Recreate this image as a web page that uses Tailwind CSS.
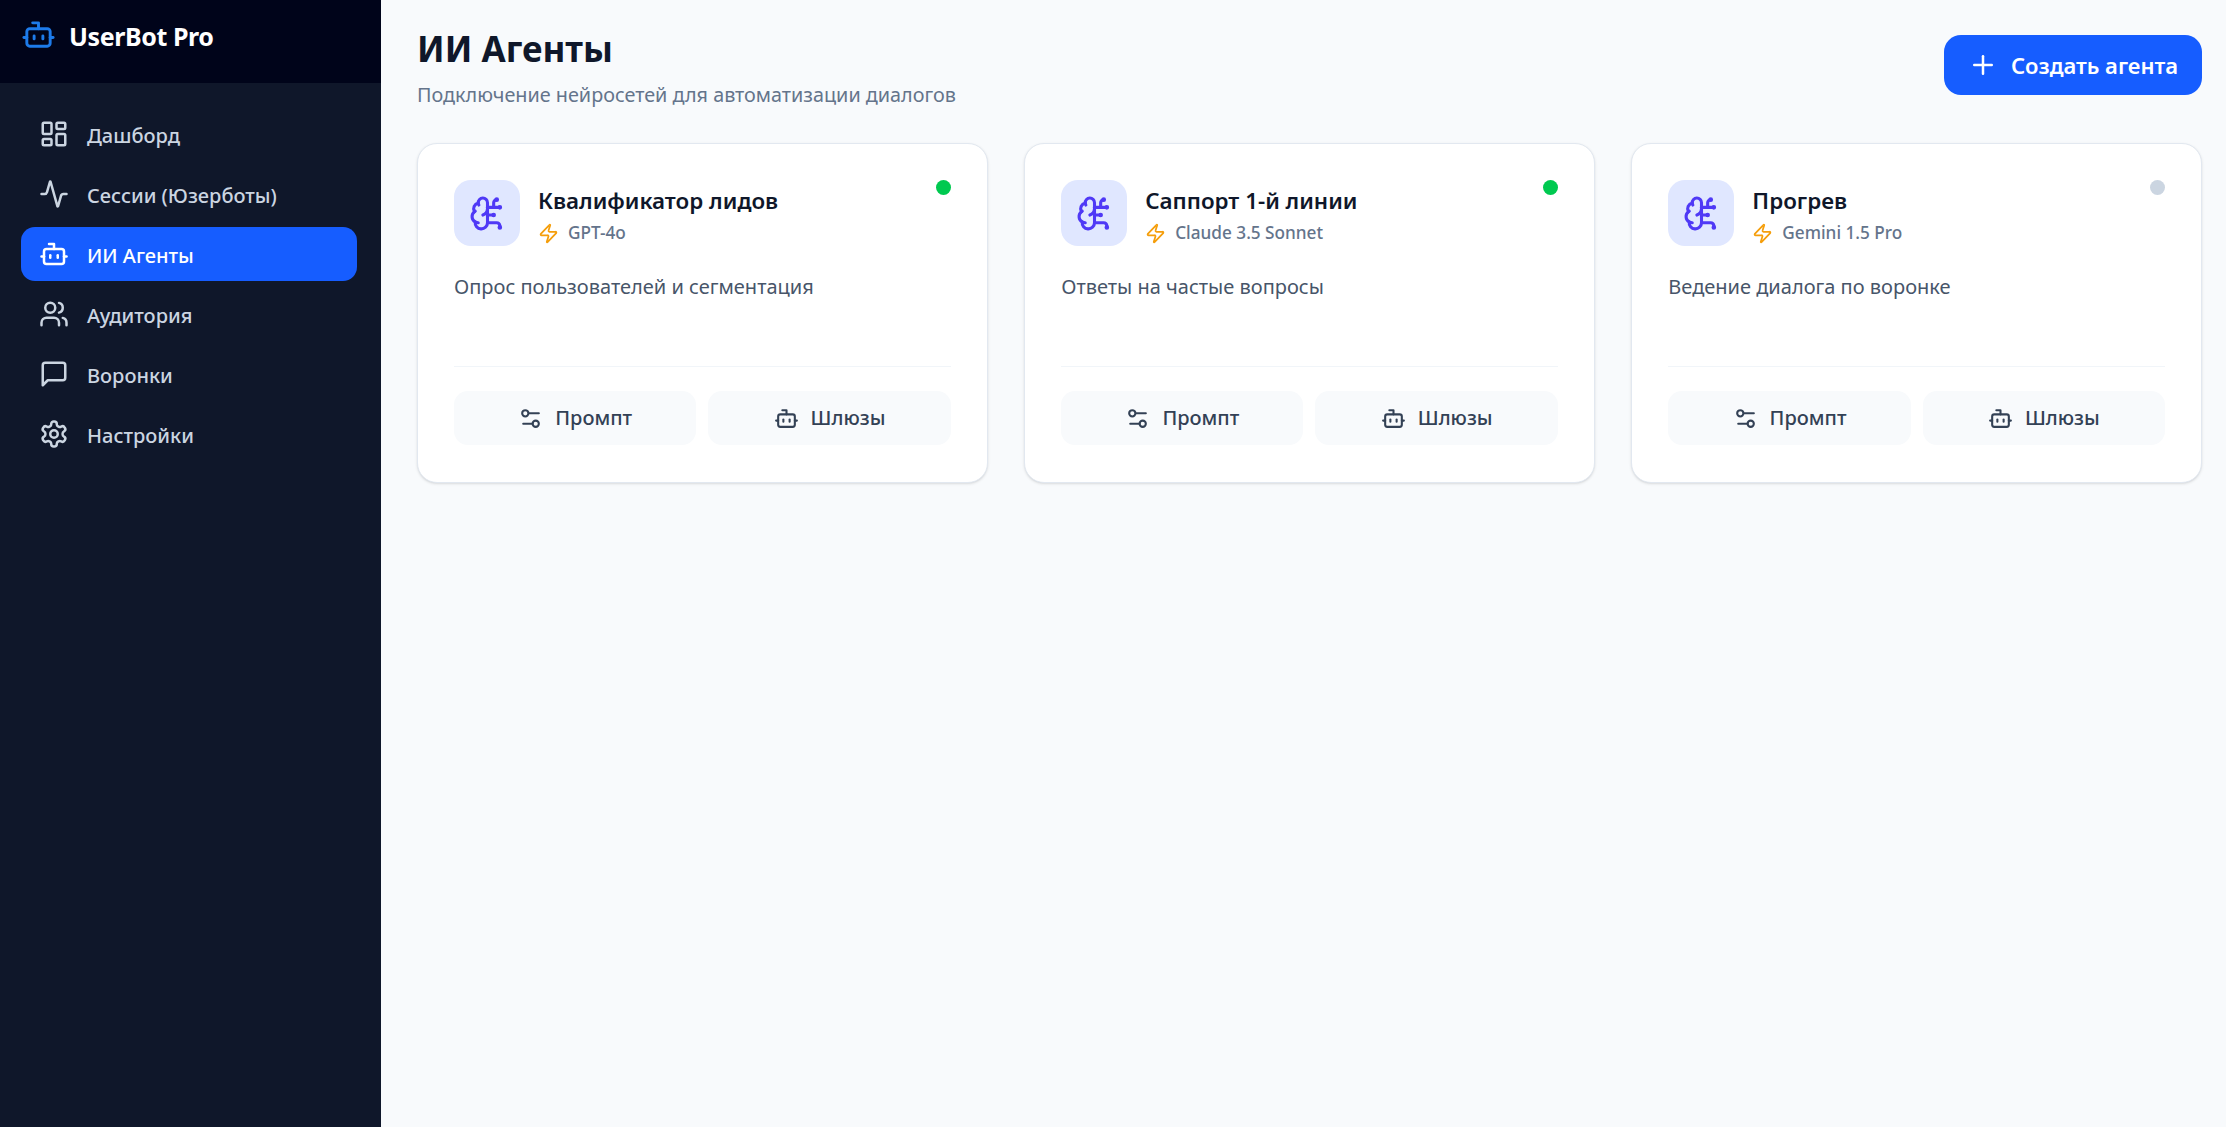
<!DOCTYPE html>
<html lang="ru">
<head>
  <meta charset="UTF-8" />
  <title>UserBot Pro</title>
  <script src="https://cdn.jsdelivr.net/npm/@tailwindcss/browser@4"></script>
</head>
<body class="bg-[#f8fafc] font-['Noto_Sans','Open_Sans',sans-serif]">

  <!-- icons -->
  <svg class="hidden">
    <symbol id="i-dash" viewBox="0 0 24 24"><rect width="7" height="9" x="3" y="3" rx="1"/><rect width="7" height="5" x="14" y="3" rx="1"/><rect width="7" height="9" x="14" y="12" rx="1"/><rect width="7" height="5" x="3" y="16" rx="1"/></symbol>
    <symbol id="i-activity" viewBox="0 0 24 24"><path d="M22 12h-2.48a2 2 0 0 0-1.93 1.46l-2.35 8.36a.25.25 0 0 1-.48 0L9.24 2.18a.25.25 0 0 0-.48 0l-2.35 8.36A2 2 0 0 1 4.49 12H2"/></symbol>
    <symbol id="i-bot" viewBox="0 0 24 24"><path d="M12 8V4H8"/><rect width="16" height="12" x="4" y="8" rx="2"/><path d="M2 14h2"/><path d="M20 14h2"/><path d="M15 13v2"/><path d="M9 13v2"/></symbol>
    <symbol id="i-users" viewBox="0 0 24 24"><path d="M16 21v-2a4 4 0 0 0-4-4H6a4 4 0 0 0-4 4v2"/><circle cx="9" cy="7" r="4"/><path d="M22 21v-2a4 4 0 0 0-3-3.87"/><path d="M16 3.13a4 4 0 0 1 0 7.75"/></symbol>
    <symbol id="i-msg" viewBox="0 0 24 24"><path d="M21 15a2 2 0 0 1-2 2H7l-4 4V5a2 2 0 0 1 2-2h14a2 2 0 0 1 2 2z"/></symbol>
    <symbol id="i-gear" viewBox="0 0 24 24"><path d="M12.22 2h-.44a2 2 0 0 0-2 2v.18a2 2 0 0 1-1 1.73l-.43.25a2 2 0 0 1-2 0l-.15-.08a2 2 0 0 0-2.73.73l-.22.38a2 2 0 0 0 .73 2.73l.15.1a2 2 0 0 1 1 1.72v.51a2 2 0 0 1-1 1.74l-.15.09a2 2 0 0 0-.73 2.73l.22.38a2 2 0 0 0 2.73.73l.15-.08a2 2 0 0 1 2 0l.43.25a2 2 0 0 1 1 1.73V20a2 2 0 0 0 2 2h.44a2 2 0 0 0 2-2v-.18a2 2 0 0 1 1-1.73l.43-.25a2 2 0 0 1 2 0l.15.08a2 2 0 0 0 2.73-.73l.22-.39a2 2 0 0 0-.73-2.73l-.15-.08a2 2 0 0 1-1-1.74v-.5a2 2 0 0 1 1-1.74l.15-.09a2 2 0 0 0 .73-2.73l-.22-.38a2 2 0 0 0-2.73-.73l-.15.08a2 2 0 0 1-2 0l-.43-.25a2 2 0 0 1-1-1.73V4a2 2 0 0 0-2-2z"/><circle cx="12" cy="12" r="3"/></symbol>
    <symbol id="i-brain" viewBox="0 0 24 24"><path d="M12 5a3 3 0 1 0-5.997.125 4 4 0 0 0-2.526 5.77 4 4 0 0 0 .556 6.588A4 4 0 1 0 12 18Z"/><path d="M9 13a4.5 4.5 0 0 0 3-4"/><path d="M6.003 5.125A3 3 0 0 0 6.401 6.5"/><path d="M3.477 10.896a4 4 0 0 1 .585-.396"/><path d="M6 18a4 4 0 0 1-1.967-.516"/><path d="M12 13h4"/><path d="M12 18h6a2 2 0 0 1 2 2v1"/><path d="M12 8h8"/><path d="M16 8V5a2 2 0 0 1 2-2"/><circle cx="16" cy="13" r=".5"/><circle cx="18" cy="3" r=".5"/><circle cx="20" cy="21" r=".5"/><circle cx="20" cy="8" r=".5"/></symbol>
    <symbol id="i-zap" viewBox="0 0 24 24"><path d="M4 14a1 1 0 0 1-.78-1.63l9.9-10.2a.5.5 0 0 1 .86.46l-1.92 6.02A1 1 0 0 0 13 10h7a1 1 0 0 1 .78 1.63l-9.9 10.2a.5.5 0 0 1-.86-.46l1.92-6.02A1 1 0 0 0 11 14z"/></symbol>
    <symbol id="i-sliders" viewBox="0 0 24 24"><path d="M20 7h-9"/><path d="M14 17H5"/><circle cx="17" cy="17" r="3"/><circle cx="7" cy="7" r="3"/></symbol>
    <symbol id="i-plus" viewBox="0 0 24 24"><path d="M5 12h14"/><path d="M12 5v14"/></symbol>
  </svg>

  <div class="flex h-[1127px]">

    <!-- Sidebar -->
    <aside class="w-[381px] shrink-0 bg-[#0f172a]">
      <div class="h-[83px] bg-[#00041a] flex items-start pt-[17px] pl-[21px] gap-[13px]">
        <svg class="w-[35px] h-[35px] text-[#1d7bea] fill-none stroke-current stroke-2 [stroke-linecap:round] [stroke-linejoin:round]"><use href="#i-bot"/></svg>
        <span class="text-[25px] leading-[38px] font-bold text-white tracking-[-0.4px]">UserBot Pro</span>
      </div>
      <nav class="pl-[21px] pr-[24px] pt-[24px] flex flex-col gap-[6px]">
        <a class="h-[54px] flex items-center gap-[18px] px-[18px] rounded-[14px] text-[20px] font-medium text-[#cbd5e1]">
          <svg class="w-[30px] h-[30px] fill-none stroke-current stroke-2 [stroke-linecap:round] [stroke-linejoin:round]"><use href="#i-dash"/></svg>
          <span class="pt-[4px]">Дашборд</span>
        </a>
        <a class="h-[54px] flex items-center gap-[18px] px-[18px] rounded-[14px] text-[20px] font-medium text-[#cbd5e1]">
          <svg class="w-[30px] h-[30px] fill-none stroke-current stroke-2 [stroke-linecap:round] [stroke-linejoin:round]"><use href="#i-activity"/></svg>
          <span class="pt-[4px]">Сессии (Юзерботы)</span>
        </a>
        <a class="h-[54px] flex items-center gap-[18px] px-[18px] rounded-[14px] text-[20px] font-medium text-white bg-[#165dff]">
          <svg class="w-[30px] h-[30px] fill-none stroke-current stroke-2 [stroke-linecap:round] [stroke-linejoin:round]"><use href="#i-bot"/></svg>
          <span class="pt-[4px]">ИИ Агенты</span>
        </a>
        <a class="h-[54px] flex items-center gap-[18px] px-[18px] rounded-[14px] text-[20px] font-medium text-[#cbd5e1]">
          <svg class="w-[30px] h-[30px] fill-none stroke-current stroke-2 [stroke-linecap:round] [stroke-linejoin:round]"><use href="#i-users"/></svg>
          <span class="pt-[4px]">Аудитория</span>
        </a>
        <a class="h-[54px] flex items-center gap-[18px] px-[18px] rounded-[14px] text-[20px] font-medium text-[#cbd5e1]">
          <svg class="w-[30px] h-[30px] fill-none stroke-current stroke-2 [stroke-linecap:round] [stroke-linejoin:round]"><use href="#i-msg"/></svg>
          <span class="pt-[4px]">Воронки</span>
        </a>
        <a class="h-[54px] flex items-center gap-[18px] px-[18px] rounded-[14px] text-[20px] font-medium text-[#cbd5e1]">
          <svg class="w-[30px] h-[30px] fill-none stroke-current stroke-2 [stroke-linecap:round] [stroke-linejoin:round]"><use href="#i-gear"/></svg>
          <span class="pt-[4px]">Настройки</span>
        </a>
      </nav>
    </aside>

    <!-- Main -->
    <main class="flex-1 pl-[36px] pr-[24px] pt-[35px]">
      <div class="flex justify-between items-start h-[108px]">
        <div>
          <h1 class="text-[35px] leading-[28px] font-bold text-[#0f172a]">ИИ Агенты</h1>
          <p class="mt-[18px] text-[19.8px] leading-[28px] text-[#64748b]">Подключение нейросетей для автоматизации диалогов</p>
        </div>
        <button class="h-[60px] w-[258px] flex items-center justify-center gap-[13px] rounded-[17px] bg-[#165dff] text-white text-[22px] font-semibold">
          <svg class="w-[30px] h-[30px] fill-none stroke-current stroke-2 [stroke-linecap:round] [stroke-linejoin:round]"><use href="#i-plus"/></svg>
          Создать агента
        </button>
      </div>

      <div class="grid grid-cols-3 gap-[36.5px]">

        <!-- Card 1 -->
        <div class="h-[340px] bg-white rounded-[20px] border border-[#e2e8f0] shadow-sm px-[36px] pt-[36px] flex flex-col">
          <div class="flex justify-between h-[66px]">
            <div class="flex gap-[18px]">
              <div class="w-[66px] h-[66px] rounded-[17px] bg-[#e0e7ff] flex items-center justify-center">
                <svg class="w-[37px] h-[37px] text-[#4f39f6] fill-none stroke-current stroke-2 [stroke-linecap:round] [stroke-linejoin:round]"><use href="#i-brain"/></svg>
              </div>
              <div>
                <h3 class="text-[22.4px] leading-[32px] font-semibold text-[#0f172a] mt-[5px]">Квалификатор лидов</h3>
                <div class="flex items-center gap-[9px] mt-[4px] text-[17.2px] leading-[24px] font-medium text-[#64748b]">
                  <svg class="w-[21px] h-[21px] text-[#f59e0b] fill-none stroke-current stroke-2 [stroke-linecap:round] [stroke-linejoin:round]"><use href="#i-zap"/></svg>
                  GPT-4o
                </div>
              </div>
            </div>
            <span class="w-[15px] h-[15px] rounded-full bg-[#00c950]"></span>
          </div>
          <p class="mt-[27px] h-[66px] text-[20px] leading-[28px] text-[#475569]">Опрос пользователей и сегментация</p>
          <div class="mt-[27px] border-t border-[#f1f5f9] pt-[24px] grid grid-cols-2 gap-[12px]">
            <button class="h-[54px] flex items-center justify-center gap-[12px] rounded-[14px] bg-[#f8fafc] text-[20px] font-medium text-[#334155]">
              <svg class="w-[25px] h-[25px] fill-none stroke-current stroke-2 [stroke-linecap:round] [stroke-linejoin:round]"><use href="#i-sliders"/></svg>
              Промпт
            </button>
            <button class="h-[54px] flex items-center justify-center gap-[12px] rounded-[14px] bg-[#f8fafc] text-[20px] font-medium text-[#334155]">
              <svg class="w-[25px] h-[25px] fill-none stroke-current stroke-2 [stroke-linecap:round] [stroke-linejoin:round]"><use href="#i-bot"/></svg>
              Шлюзы
            </button>
          </div>
        </div>

        <!-- Card 2 -->
        <div class="h-[340px] bg-white rounded-[20px] border border-[#e2e8f0] shadow-sm px-[36px] pt-[36px] flex flex-col">
          <div class="flex justify-between h-[66px]">
            <div class="flex gap-[18px]">
              <div class="w-[66px] h-[66px] rounded-[17px] bg-[#e0e7ff] flex items-center justify-center">
                <svg class="w-[37px] h-[37px] text-[#4f39f6] fill-none stroke-current stroke-2 [stroke-linecap:round] [stroke-linejoin:round]"><use href="#i-brain"/></svg>
              </div>
              <div>
                <h3 class="text-[22.4px] leading-[32px] font-semibold text-[#0f172a] mt-[5px]">Саппорт 1-й линии</h3>
                <div class="flex items-center gap-[9px] mt-[4px] text-[17.2px] leading-[24px] font-medium text-[#64748b]">
                  <svg class="w-[21px] h-[21px] text-[#f59e0b] fill-none stroke-current stroke-2 [stroke-linecap:round] [stroke-linejoin:round]"><use href="#i-zap"/></svg>
                  Claude 3.5 Sonnet
                </div>
              </div>
            </div>
            <span class="w-[15px] h-[15px] rounded-full bg-[#00c950]"></span>
          </div>
          <p class="mt-[27px] h-[66px] text-[20px] leading-[28px] text-[#475569]">Ответы на частые вопросы</p>
          <div class="mt-[27px] border-t border-[#f1f5f9] pt-[24px] grid grid-cols-2 gap-[12px]">
            <button class="h-[54px] flex items-center justify-center gap-[12px] rounded-[14px] bg-[#f8fafc] text-[20px] font-medium text-[#334155]">
              <svg class="w-[25px] h-[25px] fill-none stroke-current stroke-2 [stroke-linecap:round] [stroke-linejoin:round]"><use href="#i-sliders"/></svg>
              Промпт
            </button>
            <button class="h-[54px] flex items-center justify-center gap-[12px] rounded-[14px] bg-[#f8fafc] text-[20px] font-medium text-[#334155]">
              <svg class="w-[25px] h-[25px] fill-none stroke-current stroke-2 [stroke-linecap:round] [stroke-linejoin:round]"><use href="#i-bot"/></svg>
              Шлюзы
            </button>
          </div>
        </div>

        <!-- Card 3 -->
        <div class="h-[340px] bg-white rounded-[20px] border border-[#e2e8f0] shadow-sm px-[36px] pt-[36px] flex flex-col">
          <div class="flex justify-between h-[66px]">
            <div class="flex gap-[18px]">
              <div class="w-[66px] h-[66px] rounded-[17px] bg-[#e0e7ff] flex items-center justify-center">
                <svg class="w-[37px] h-[37px] text-[#4f39f6] fill-none stroke-current stroke-2 [stroke-linecap:round] [stroke-linejoin:round]"><use href="#i-brain"/></svg>
              </div>
              <div>
                <h3 class="text-[22.4px] leading-[32px] font-semibold text-[#0f172a] mt-[5px]">Прогрев</h3>
                <div class="flex items-center gap-[9px] mt-[4px] text-[17.2px] leading-[24px] font-medium text-[#64748b]">
                  <svg class="w-[21px] h-[21px] text-[#f59e0b] fill-none stroke-current stroke-2 [stroke-linecap:round] [stroke-linejoin:round]"><use href="#i-zap"/></svg>
                  Gemini 1.5 Pro
                </div>
              </div>
            </div>
            <span class="w-[15px] h-[15px] rounded-full bg-[#cbd5e1]"></span>
          </div>
          <p class="mt-[27px] h-[66px] text-[20px] leading-[28px] text-[#475569]">Ведение диалога по воронке</p>
          <div class="mt-[27px] border-t border-[#f1f5f9] pt-[24px] grid grid-cols-2 gap-[12px]">
            <button class="h-[54px] flex items-center justify-center gap-[12px] rounded-[14px] bg-[#f8fafc] text-[20px] font-medium text-[#334155]">
              <svg class="w-[25px] h-[25px] fill-none stroke-current stroke-2 [stroke-linecap:round] [stroke-linejoin:round]"><use href="#i-sliders"/></svg>
              Промпт
            </button>
            <button class="h-[54px] flex items-center justify-center gap-[12px] rounded-[14px] bg-[#f8fafc] text-[20px] font-medium text-[#334155]">
              <svg class="w-[25px] h-[25px] fill-none stroke-current stroke-2 [stroke-linecap:round] [stroke-linejoin:round]"><use href="#i-bot"/></svg>
              Шлюзы
            </button>
          </div>
        </div>

      </div>
    </main>
  </div>
</body>
</html>
